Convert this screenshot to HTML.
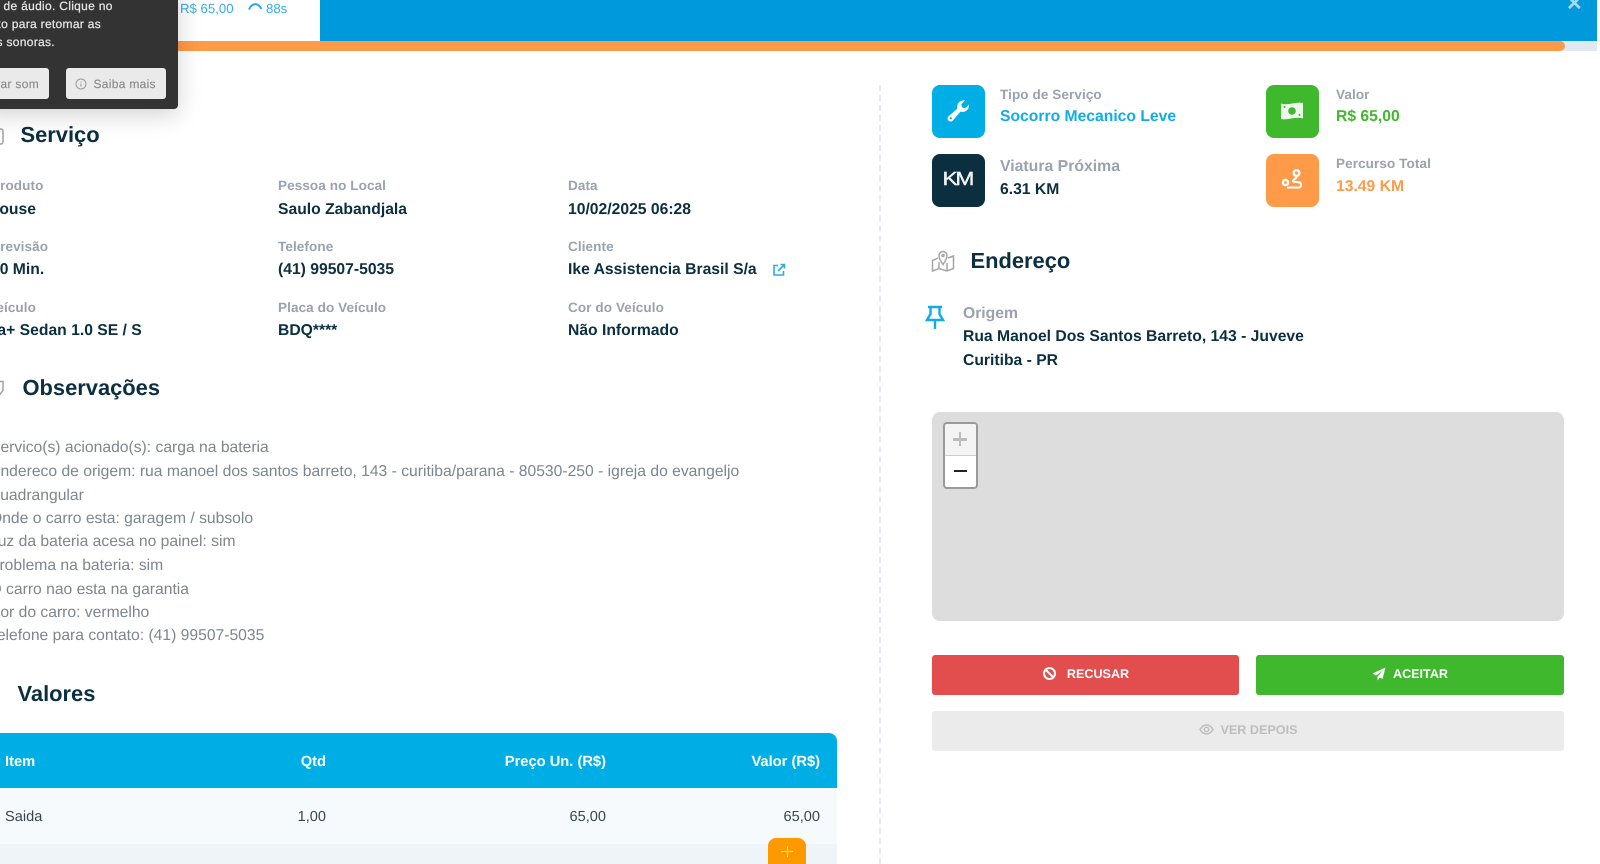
<!DOCTYPE html>
<html lang="pt-BR"><head><meta charset="utf-8"><title>Serviço</title>
<style>
html,body{margin:0;padding:0;width:1600px;height:864px;overflow:hidden;background:#fff}
body{position:relative;font-family:"Liberation Sans",sans-serif;color:#0b2f3f;text-rendering:geometricPrecision}
.a{position:absolute;white-space:nowrap}
.lab{font-size:13.5px;font-weight:700;color:#9aa2ae;line-height:18px;letter-spacing:.1px}
.val{font-size:15.7px;font-weight:700;color:#0b2f3f;line-height:20px}
.h{font-size:21.9px;font-weight:700;color:#0b2f3f;line-height:28px}
.obs{font-size:15.68px;color:#7d858d;line-height:20px}
.ic{position:absolute;width:52.5px;height:52.5px;border-radius:8px;display:flex;align-items:center;justify-content:center}
.th{font-size:14.7px;font-weight:700;color:#fff;line-height:18px}
.td{font-size:14.6px;color:#37474f;line-height:18px}
.btn{position:absolute;height:40px;border-radius:3px;display:flex;align-items:center;justify-content:center;font-size:12.6px;font-weight:700;color:#fff;box-sizing:border-box}
.tst{font-size:12px;color:#e4e4e4;line-height:18px;letter-spacing:.3px;-webkit-text-stroke:.25px #e4e4e4}
.tb{font-size:12px;color:#8a8a8a;line-height:18px;letter-spacing:.3px;-webkit-text-stroke:.15px #8a8a8a}
svg{display:block}
</style></head><body>

<!-- header -->
<div class="a" style="left:320px;top:0;width:1277px;height:41px;background:#0099dc"></div>
<div class="a" style="left:1566px;top:-6px;font-size:20px;font-weight:700;color:#a9d8f2;line-height:20px">✕</div>
<div class="a" style="left:0;top:41px;width:1597px;height:10px;background:#e2e8f0"></div>
<div class="a" style="left:0;top:41px;width:1565px;height:10px;background:#ff9a48;border-radius:0 5px 5px 0"></div>
<div class="a" style="left:180px;top:0;font-size:13.2px;color:#36ade6;line-height:18px">R$ 65,00</div>
<svg class="a" style="left:247px;top:0" width="18" height="14" viewBox="0 0 18 14"><path d="M2 9.500C5 2.500 11 2.500 14.500 9" fill="none" stroke="#2aa8e6" stroke-width="2"/></svg>
<div class="a" style="left:266px;top:0;font-size:13.2px;color:#36ade6;line-height:18px">88s</div>

<!-- left titles -->
<svg class="a" style="left:-9px;top:126px" width="14" height="20" viewBox="0 0 14 20"><rect x="1" y="3" width="11" height="15" rx="2" fill="none" stroke="#a3a3a3" stroke-width="1.500"/></svg>
<div class="a h" style="left:20.500px;top:121px">Serviço</div>

<div class="a lab" style="left:-9px;top:177px">Produto</div>
<div class="a val" style="left:-12px;top:200px">House</div>
<div class="a lab" style="left:-9px;top:238px">Previsão</div>
<div class="a val" style="left:-9px;top:260px">30 Min.</div>
<div class="a lab" style="left:-12px;top:299px">Veículo</div>
<div class="a val" style="left:-27px;top:321px">Vera+ Sedan 1.0 SE / S</div>

<div class="a lab" style="left:278px;top:177px">Pessoa no Local</div>
<div class="a val" style="left:278px;top:200px">Saulo Zabandjala</div>
<div class="a lab" style="left:278px;top:238px">Telefone</div>
<div class="a val" style="left:278px;top:260px">(41) 99507-5035</div>
<div class="a lab" style="left:278px;top:299px">Placa do Veículo</div>
<div class="a val" style="left:278px;top:321px">BDQ****</div>

<div class="a lab" style="left:568px;top:177px">Data</div>
<div class="a val" style="left:568px;top:200px">10/02/2025 06:28</div>
<div class="a lab" style="left:568px;top:238px">Cliente</div>
<div class="a val" style="left:568px;top:260px">Ike Assistencia Brasil S/a</div>
<div class="a lab" style="left:568px;top:299px">Cor do Veículo</div>
<div class="a val" style="left:568px;top:321px">Não Informado</div>
<svg class="a" style="left:772px;top:263px" width="14" height="14" viewBox="0 0 14 14" fill="none" stroke="#2aaee6" stroke-width="1.600"><path d="M6 2.500H2v9.500h9.500V8"/><path d="M6 8l6-6M8.500 1.500H12.500V5.500"/></svg>

<svg class="a" style="left:-10px;top:379px" width="16" height="20" viewBox="0 0 16 20"><path d="M1 2.500h12v9l-4 5H3.500L1 15z" fill="none" stroke="#a3a3a3" stroke-width="1.500"/></svg>
<div class="a h" style="left:22.500px;top:374px">Observações</div>

<div class="a obs" style="left:-10px;top:438px">Servico(s) acionado(s): carga na bateria</div>
<div class="a obs" style="left:-10px;top:462px">Endereco de origem: rua manoel dos santos barreto, 143 - curitiba/parana - 80530-250 - igreja do evangeljo</div>
<div class="a obs" style="left:-12px;top:486px">Quadrangular</div>
<div class="a obs" style="left:-10px;top:509px">Onde o carro esta: garagem / subsolo</div>
<div class="a obs" style="left:-11px;top:532px">Luz da bateria acesa no painel: sim</div>
<div class="a obs" style="left:-11px;top:556px">Problema na bateria: sim</div>
<div class="a obs" style="left:-10.500px;top:580px">O carro nao esta na garantia</div>
<div class="a obs" style="left:-11px;top:603px">Cor do carro: vermelho</div>
<div class="a obs" style="left:-11px;top:626px">Telefone para contato: (41) 99507-5035</div>

<div class="a" style="left:-6px;top:693px;width:6px;height:2px;background:#aaa"></div>
<div class="a h" style="left:17.500px;top:680px">Valores</div>

<!-- table -->
<div class="a" style="left:0;top:732.500px;width:837px;height:55.500px;background:#00aee6;border-radius:0 8px 0 0"></div>
<div class="a" style="left:0;top:788px;width:837px;height:56px;background:#f6fafd"></div>
<div class="a" style="left:0;top:844px;width:837px;height:20px;background:#eff4f8"></div>
<div class="a th" style="left:5px;top:753px">Item</div>
<div class="a th" style="right:1274px;top:753px">Qtd</div>
<div class="a th" style="right:994px;top:753px">Preço Un. (R$)</div>
<div class="a th" style="right:780px;top:753px">Valor (R$)</div>
<div class="a td" style="left:5px;top:808px">Saida</div>
<div class="a td" style="right:1274px;top:808px">1,00</div>
<div class="a td" style="right:994px;top:808px">65,00</div>
<div class="a td" style="right:780px;top:808px">65,00</div>
<div class="a" style="left:768px;top:838px;width:38px;height:26px;background:#ff9900;border-radius:8px 8px 0 0"></div>
<div class="a" style="left:781px;top:851px;width:12px;height:1px;background:#ffe0a8"></div>
<div class="a" style="left:786.500px;top:846px;width:1px;height:11px;background:#ffe0a8"></div>

<!-- divider -->
<div class="a" style="left:879px;top:85px;height:779px;border-left:2px dashed #e4e9ee"></div>

<!-- toast -->
<div class="a" style="left:-20px;top:-20px;width:198px;height:129px;background:#333;border-radius:4px;box-shadow:0 6px 24px rgba(0,0,0,.18)"></div>
<div class="a tst" style="left:-21px;top:-3px">ade de áudio. Clique no<br><span style="margin-left:-8px">abaixo para retomar as</span><br><span style="margin-left:-7px">notas sonoras.</span></div>
<div class="a" style="left:-30px;top:68px;width:79px;height:31px;background:#eaeaea;border-radius:3px"></div>
<div class="a tb" style="right:1561px;top:75px">Ativar som</div>
<div class="a" style="left:66px;top:68px;width:100px;height:31px;background:#eaeaea;border-radius:3px"></div>
<svg class="a" style="left:75px;top:78px" width="12" height="12" viewBox="0 0 12 12" fill="none" stroke="#9a9a9a"><circle cx="6" cy="6" r="5"/><path d="M6 5.500v3M6 3.500v1"/></svg>
<div class="a tb" style="left:93.500px;top:75px">Saiba mais</div>

<!-- right info -->
<div class="ic" style="left:932px;top:85px;background:#00aee6"><svg width="26" height="26" viewBox="0 0 26 26"><path d="M24 7.500a6.500 6.500 0 0 1-8.600 6.100L7.800 22.600a3 3 0 0 1-4.400-4.200l9-7.800A6.500 6.500 0 0 1 20 2.500L16.300 6.200l.8 3.200 3.200.8L24 6.500z" fill="#fff"/><circle cx="5.800" cy="20.200" r="1.100" fill="#00aee6"/></svg></div>
<div class="a lab" style="left:1000px;top:85.500px">Tipo de Serviço</div>
<div class="a val" style="left:1000px;top:107px;color:#10ace6">Socorro Mecanico Leve</div>

<div class="ic" style="left:932px;top:154px;background:#0b2f3f"><div style="color:#f2f2f2;font-size:19px;font-weight:400;letter-spacing:-2px;transform:scaleX(1.200);-webkit-text-stroke:.4px #f2f2f2;margin-left:-2px">KM</div></div>
<div class="a" style="left:1000px;top:158px;font-size:15.8px;font-weight:700;color:#9aa2ae;line-height:18px">Viatura Próxima</div>
<div class="a val" style="left:1000px;top:180px">6.31 KM</div>

<div class="ic" style="left:1266px;top:85px;background:#3fb82e"><svg width="26" height="22" viewBox="0 0 26 22"><path d="M2 3.500c7 2.500 15-2 22-.5v15.500c-7-2.500-15 2-22 .5z" fill="#eef8ea"/><circle cx="13" cy="11" r="3.800" fill="#3fb82e"/><circle cx="5.500" cy="7" r="1" fill="#3fb82e"/><circle cx="20.500" cy="15" r="1" fill="#3fb82e"/></svg></div>
<div class="a lab" style="left:1336px;top:85.500px">Valor</div>
<div class="a val" style="left:1336px;top:107px;color:#3fb82e">R$ 65,00</div>

<div class="ic" style="left:1266px;top:154px;background:#ff9a48"><svg width="24" height="24" viewBox="0 0 24 24" fill="none" stroke="#fff" stroke-width="2"><circle cx="16.500" cy="5" r="2.800" stroke-width="2.400"/><circle cx="5.500" cy="14.500" r="2.600" stroke-width="2.400"/><path d="M16.500 8.500c0 3-3.500 2.500-3.500 4.500s8-.5 8 3.500-2.500 3-6.500 3H7"/></svg></div>
<div class="a lab" style="left:1336px;top:154.500px">Percurso Total</div>
<div class="a val" style="left:1336px;top:177px;color:#ff9a48">13.49 KM</div>

<!-- endereco -->
<svg class="a" style="left:931px;top:249px" width="24" height="24" viewBox="0 0 24 24" fill="none" stroke="#a5a5a5" stroke-width="1.500"><path d="M7 9L1.500 11.500V22l6.500-2.500 8 2.500 6.500-2.500V7L17 9"/><path d="M8 19.500V13M16 22v-8"/><path d="M12 15.500S8 10 8 6.500a4 4 0 0 1 8 0C16 10 12 15.500 12 15.500z"/><circle cx="12" cy="6.500" r="1"/></svg>
<div class="a h" style="left:970.500px;top:247px">Endereço</div>

<svg class="a" style="left:924.500px;top:305px" width="20" height="25" viewBox="0 0 20 25" fill="none" stroke="#10ace6" stroke-width="2.400"><path d="M3 2h14M5.500 2v7L2 15h16l-3.500-6V2M10 15v9"/></svg>
<div class="a" style="left:963px;top:304.500px;font-size:15.7px;font-weight:700;color:#9aa2ae;line-height:18px">Origem</div>
<div class="a val" style="left:963px;top:327px">Rua Manoel Dos Santos Barreto, 143 - Juveve</div>
<div class="a val" style="left:963px;top:351px">Curitiba - PR</div>

<!-- map -->
<div class="a" style="left:932px;top:412px;width:632px;height:209px;background:#ddd;border-radius:8px"></div>
<div class="a" style="left:942.500px;top:422px;width:31px;height:63px;border:2px solid rgba(0,0,0,.3);border-radius:4px;background:#fff;overflow:hidden;background-clip:padding-box">
  <div style="height:31.500px;background:#f4f4f4;border-bottom:1px solid #ccc;box-sizing:border-box;position:relative"><div style="position:absolute;left:8.500px;top:14px;width:14px;height:2.500px;background:#bbb"></div><div style="position:absolute;left:14.300px;top:8px;width:2.500px;height:14px;background:#bbb"></div></div>
  <div style="height:31.500px;position:relative"><div style="position:absolute;left:9px;top:14px;width:13px;height:2.500px;background:#222"></div></div>
</div>

<!-- buttons -->
<div class="btn" style="left:932px;top:654.500px;width:307px;background:#e24e4e;padding-bottom:2px"><svg width="15" height="15" viewBox="0 0 15 15" fill="none" stroke="#fff" stroke-width="2" style="margin-right:10px"><circle cx="7.500" cy="7.500" r="5.500"/><path d="M3.500 3.500l8 8"/></svg>RECUSAR</div>
<div class="btn" style="left:1256px;top:654.500px;width:308px;background:#3fb82e;padding-bottom:2px"><svg width="14" height="14" viewBox="0 0 14 14" style="margin-right:7px"><path d="M13.500.5L.5 6.500l3.500 2L11 3.500 5.500 9.500v4l2.500-3 2.500 1.500z" fill="#fff"/></svg>ACEITAR</div>
<div class="btn" style="left:932px;top:711px;width:632px;background:#ebebeb;color:#bdbdbd;padding-bottom:3px"><svg width="15" height="15" viewBox="0 0 15 15" fill="none" stroke="#bdbdbd" stroke-width="1.400" style="margin-right:7px"><path d="M1 7.500C3 4 5 3 7.500 3s4.500 1 6.500 4.500C12 11 10 12 7.500 12S3 11 1 7.500z"/><circle cx="7.500" cy="7.500" r="2.200"/></svg>VER DEPOIS</div>

</body></html>
